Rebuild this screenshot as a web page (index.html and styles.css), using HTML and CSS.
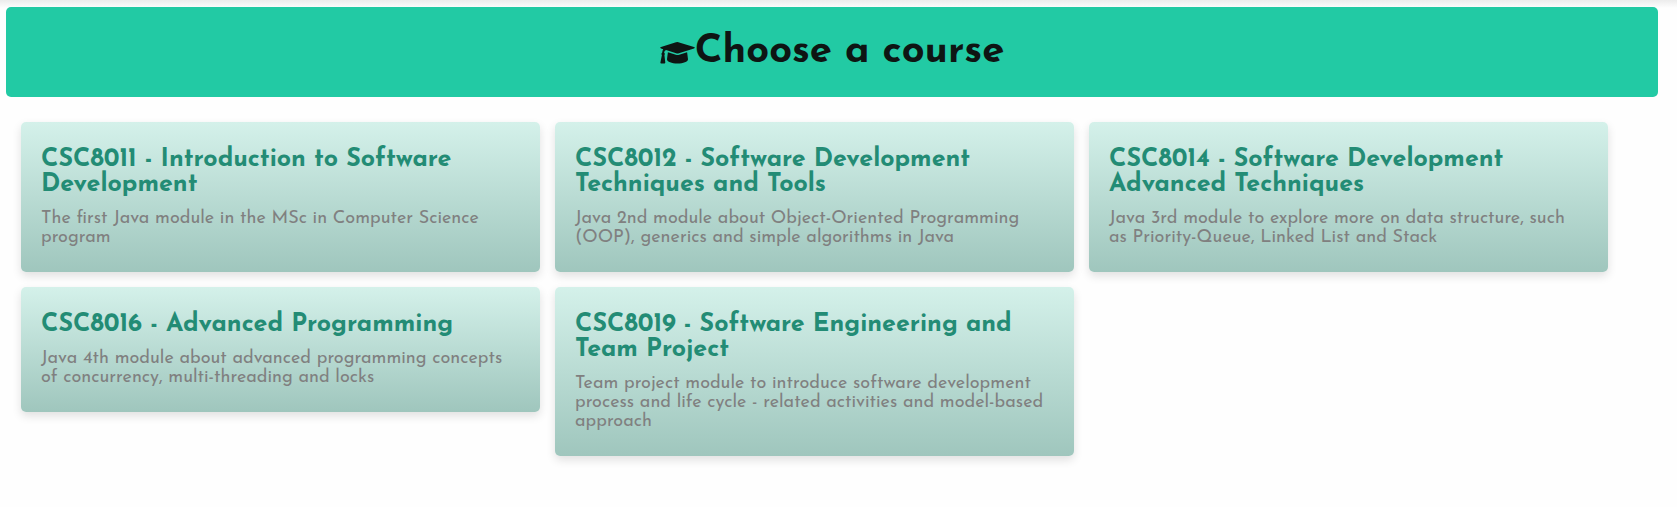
FILE: index.html
```html
<!DOCTYPE html>
<html lang="en">
<head>
<meta charset="utf-8">
<title>Choose a course</title>
<link rel="stylesheet" href="styles.css">
</head>
<body>
<main class="page">
  <header class="banner">
    <svg class="banner-icon" viewBox="0 0 35 22" aria-hidden="true">
      <path d="M17.5 0 34 5.1Q35.5 5.8 34 6.5L18.8 11.2Q17.5 11.6 16.2 11.2L6 8Q4.3 8.6 4.1 10.5 5.4 11.7 4.4 13.1L5.3 20.5Q5.3 21.5 4.3 21.5H1.2Q.2 21.5.4 20.5L1.9 13.1Q.8 11.7 2.2 10.4 2.3 8.6 3.2 7.2L1 6.5Q-.5 5.8 1 5.1L16 .3Q17 0 17.5 0Z"/>
      <path d="M7.9 10.2 15.8 12.7Q17.5 13.2 19.2 12.7L27.1 10.2 28 17.2C28 19.7 23.3 21.5 17.5 21.5S7 19.7 7 17.2Z"/>
    </svg>
    <h1 class="banner-title">Choose a course</h1>
  </header>
  <section class="courses" aria-label="Courses">
    <article class="card">
      <h2 class="card-title">CSC8011 - Introduction to Software Development</h2>
      <p class="card-text">The first Java module in the MSc in Computer Science program</p>
    </article>
    <article class="card">
      <h2 class="card-title">CSC8012 - Software Development Techniques and Tools</h2>
      <p class="card-text">Java 2nd module about Object-Oriented Programming (OOP), generics and simple algorithms in Java</p>
    </article>
    <article class="card">
      <h2 class="card-title">CSC8014 - Software Development Advanced Techniques</h2>
      <p class="card-text">Java 3rd module to explore more on data structure, such as Priority-Queue, Linked List and Stack</p>
    </article>
    <article class="card">
      <h2 class="card-title">CSC8016 - Advanced Programming</h2>
      <p class="card-text">Java 4th module about advanced programming concepts of concurrency, multi-threading and locks</p>
    </article>
    <article class="card">
      <h2 class="card-title">CSC8019 - Software Engineering and Team Project</h2>
      <p class="card-text">Team project module to introduce software development process and life cycle - related activities and model-based approach</p>
    </article>
  </section>
</main>
</body>
</html>
```
FILE: styles.css
```css
* {
  box-sizing: border-box;
}

body {
  margin: 0;
  background: #fefefe;
  font-family: "Josefin Sans", Lato, sans-serif;
}

.page {
  padding: 7px 19px 50px 6px;
  background: linear-gradient(#ececec, #fefefe) top / 100% 8px no-repeat;
}

.banner {
  display: flex;
  align-items: center;
  justify-content: center;
  padding: 20px;
  border-radius: 5px;
  background: #22caa4;
  color: #0e1513;
}

.banner-icon {
  width: 35px;
  height: 22px;
  margin-top: 2px;
  fill: currentColor;
}

.banner-title {
  margin: 0;
  font-size: 40px;
  line-height: 50px;
  font-weight: 700;
}

.courses {
  display: grid;
  grid-template-columns: repeat(3, 1fr);
  align-items: start;
  gap: 15px;
  padding: 25px 50px 0 15px;
}

.card {
  padding: 25px 20px 24px;
  border-radius: 5px;
  background: linear-gradient(#d4f1ea, #9fc6bd);
  box-shadow: 0 4px 10px rgba(0, 0, 0, 0.12);
}

.card-title {
  margin: 0 0 13px;
  color: #238c75;
  font-size: 25px;
  line-height: 25px;
  font-weight: 700;
}

.card-text {
  margin: 0;
  color: #808080;
  font-size: 18px;
  line-height: 19px;
}
```
